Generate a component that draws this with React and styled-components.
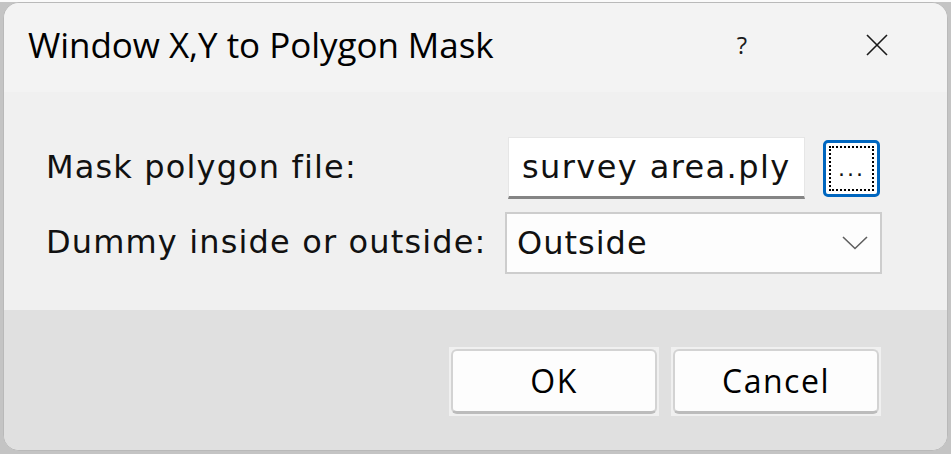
import React from 'react';
import styled, { createGlobalStyle } from 'styled-components';

const Global = createGlobalStyle`
  html, body {
    margin: 0;
    padding: 0;
    background: #d4d4d4;
    width: 951px;
    height: 454px;
    overflow: hidden;
  }
`;

const Page = styled.div`
  width: 951px;
  height: 454px;
  padding: 2px 3px 3px 3px;
  box-sizing: border-box;
  background: linear-gradient(#fafafa, #fafafa) top / 100% 2px no-repeat, #c4c4c4;
`;

const Window = styled.div`
  width: 945px;
  height: 449px;
  box-sizing: border-box;
  border: 1px solid #b9b9b9;
  border-radius: 16px;
  overflow: hidden;
  display: flex;
  flex-direction: column;
  background: #f0f0f0;
`;

const TitleBar = styled.div`
  height: 89px;
  flex: none;
  background: #f3f3f3;
  display: flex;
  align-items: center;
  padding-left: 24px;
  font-family: 'Open Sans', 'Noto Sans', sans-serif;
  color: #000;
`;

const Title = styled.div`
  flex: 1;
  font-size: 35px;
  letter-spacing: -0.05px;
  padding-bottom: 6px;
`;

const TitleButton = styled.div`
  width: ${(p) => p.w}px;
  height: 60px;
  display: flex;
  align-items: center;
  justify-content: center;
  font-size: 24px;
  color: #1a1a1a;
  padding-bottom: 6px;
`;

const Body = styled.div`
  height: 218px;
  flex: none;
  background: #f0f0f0;
  padding: 45px 0 0 42px;
  box-sizing: border-box;
  display: grid;
  grid-template-columns: 459px auto;
  grid-auto-rows: 62px;
  row-gap: 13px;
  align-items: center;
`;

const Label = styled.div`
  font-family: 'DejaVu Sans', Verdana, sans-serif;
  font-size: 32px;
  letter-spacing: 1.15px;
  color: #111;
  padding-bottom: 2px;
`;

const FieldRow = styled.div`
  display: flex;
  align-items: center;
  gap: 18px;
`;

const TextInput = styled.div`
  width: 297px;
  height: 62px;
  box-sizing: border-box;
  background: #fff;
  border: 1px solid #e6e6e6;
  border-bottom: 3px solid #858585;
  margin-left: 3px;
  display: flex;
  align-items: center;
  padding-left: 13px;
  overflow: hidden;
  white-space: nowrap;
  font-family: 'DejaVu Sans', Verdana, sans-serif;
  font-size: 32px;
  letter-spacing: 1.4px;
  color: #111;
`;

const BrowseButton = styled.div`
  width: 57px;
  height: 57px;
  box-sizing: border-box;
  border: 3px solid #0067c0;
  border-radius: 5px;
  background: #fff;
  padding: 3px;
`;

const FocusRect = styled.div`
  width: 100%;
  height: 100%;
  box-sizing: border-box;
  border: 2px dotted #000;
  display: flex;
  align-items: flex-end;
  justify-content: center;
  font-family: 'DejaVu Sans', Verdana, sans-serif;
  font-size: 22px;
  line-height: 1;
  letter-spacing: 2px;
  padding-bottom: 9px;
  color: #111;
`;

const Select = styled.div`
  width: 377px;
  height: 62px;
  box-sizing: border-box;
  background: #fdfdfd;
  border: 2px solid #cdcdcd;
  display: flex;
  align-items: center;
  justify-content: space-between;
  padding: 0 12px 0 10px;
  font-family: 'DejaVu Sans', Verdana, sans-serif;
  font-size: 32px;
  letter-spacing: 1px;
  color: #111;
`;

const Footer = styled.div`
  flex: 1;
  background: #e0e0e0;
  display: flex;
  justify-content: flex-end;
  align-items: flex-start;
  gap: 12px;
  padding: 37px 66px 0 0;
`;

const Halo = styled.div`
  padding: 2px;
  background: #f0f0f0;
`;

const Button = styled.div`
  width: 206px;
  height: 65px;
  box-sizing: border-box;
  background: #fdfdfd;
  border: 2px solid #d3d3d3;
  border-bottom: 3px solid #bcbcbc;
  border-radius: 6px;
  display: flex;
  align-items: center;
  justify-content: center;
  font-family: 'Open Sans', 'Noto Sans', sans-serif;
  font-size: 32px;
  letter-spacing: 1.5px;
  color: #000;
  padding-bottom: 2px;
`;

const Chevron = () => (
  <svg width="26" height="14" viewBox="0 0 26 14">
    <path d="M1 1 L13 12.5 L25 1" fill="none" stroke="#5f5f5f" strokeWidth="1.6" />
  </svg>
);

const CloseIcon = () => (
  <svg width="22" height="22" viewBox="0 0 22 22">
    <path d="M1 1 L21 21 M21 1 L1 21" fill="none" stroke="#1a1a1a" strokeWidth="1.6" />
  </svg>
);

export default function App() {
  return (
    <>
      <Global />
      <Page>
        <Window>
          <TitleBar>
            <Title>Window X,Y to Polygon Mask</Title>
            <TitleButton w={130}>?</TitleButton>
            <TitleButton w={140}>
              <CloseIcon />
            </TitleButton>
          </TitleBar>
          <Body>
            <Label>Mask polygon file:</Label>
            <FieldRow>
              <TextInput>survey area.ply</TextInput>
              <BrowseButton>
                <FocusRect>...</FocusRect>
              </BrowseButton>
            </FieldRow>
            <Label>Dummy inside or outside:</Label>
            <Select>
              <span>Outside</span>
              <Chevron />
            </Select>
          </Body>
          <Footer>
            <Halo>
              <Button>OK</Button>
            </Halo>
            <Halo>
              <Button>Cancel</Button>
            </Halo>
          </Footer>
        </Window>
      </Page>
    </>
  );
}
